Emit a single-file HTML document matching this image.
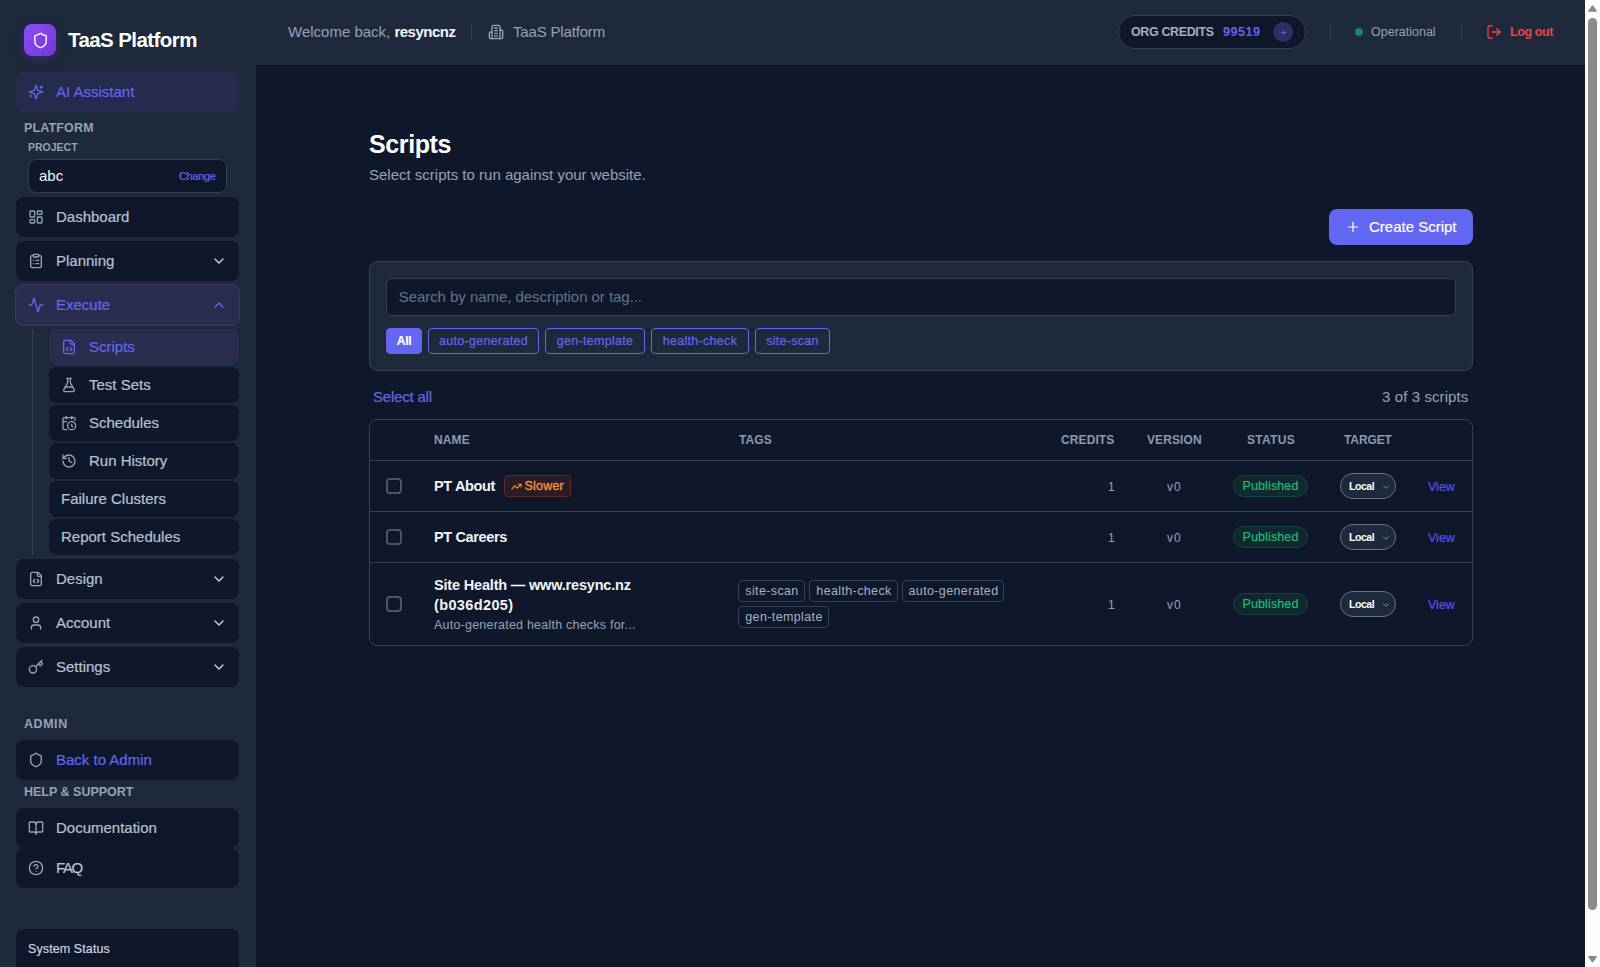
<!DOCTYPE html>
<html lang="en">
<head>
<meta charset="utf-8">
<title>TaaS Platform - Scripts</title>
<style>
*{box-sizing:border-box;margin:0;padding:0}
html,body{width:1600px;height:967px;overflow:hidden;background:#0f172a}
body{font-family:"Liberation Sans",sans-serif;color:#cbd5e1;position:relative;font-size:15px;line-height:1}
.abs{position:absolute}
svg{display:block}
.ic{position:absolute;fill:none;stroke:currentColor;stroke-width:2;stroke-linecap:round;stroke-linejoin:round}
.t{position:absolute;white-space:nowrap}

/* ---------- sidebar ---------- */
#side{position:absolute;left:0;top:0;width:256px;height:967px;background:#1e293b}
.nav{position:absolute;left:16px;width:223px;height:40px;background:#0f172a;border-radius:8px;color:#b6c2d3}
.nav .ic{left:12px;top:12px;width:16px;height:16px;color:#94a3b8}
.nav .lbl{position:absolute;left:40px;top:12px;font-size:15px;letter-spacing:0;white-space:nowrap}
.nav .chev{left:195px;top:12px;width:16px;height:16px;color:#cbd5e1}
.sub{position:absolute;left:49px;width:190px;height:36px;background:#0f172a;border-radius:8px;color:#b6c2d3}
.sub .ic{left:12px;top:10px;width:16px;height:16px;color:#94a3b8}
.sub .lbl{position:absolute;left:40px;top:10px;font-size:15px;letter-spacing:0;white-space:nowrap}
.sub.noic .lbl{left:12px}
.nav.ai{background:#242b4d;color:#6366f1}
.nav.ai .ic{color:#6366f1}
.nav.exec{left:15px;width:225px;height:42px;background:#2b2d4e;border:1px solid #3b386c;color:#6366f1}
.nav.exec .ic{left:12px;top:12px;color:#6366f1}
.nav.exec .lbl{top:12px}
.nav.exec .chev{left:195px;top:12px;color:#6366f1}
.nav.adm .lbl{color:#6366f1}
.sub.on{background:#2b2d4e;color:#6366f1}
.sub.on .ic{color:#6366f1}
.sec{position:absolute;left:24px;font-size:12.5px;font-weight:bold;letter-spacing:.15px;color:#94a3b8;white-space:nowrap}

/* ---------- header ---------- */
#head{position:absolute;left:256px;top:0;width:1329px;height:65px;background:#1e293b}
.vdiv{position:absolute;top:24px;width:1px;height:16px;background:#334155}

/* ---------- scrollbar ---------- */
#sb{position:absolute;left:1585px;top:0;width:15px;height:967px;background:#fcfcfc}
#sb .thumb{position:absolute;left:3px;top:18px;width:9px;height:892px;border-radius:5px;background:#8b8b8b}
#sb .up{position:absolute;left:3px;top:5px;width:0;height:0;border-left:4.5px solid transparent;border-right:4.5px solid transparent;border-bottom:7px solid #8b8b8b}
#sb .dn{position:absolute;left:3px;top:956px;width:0;height:0;border-left:4.5px solid transparent;border-right:4.5px solid transparent;border-top:7px solid #8b8b8b}

/* ---------- main ---------- */
#main{position:absolute;left:256px;top:65px;width:1329px;height:902px;background:#0f172a}

#mc{position:absolute;left:-256px;top:-65px;width:1600px;height:967px}
#card{position:absolute;left:369px;top:261px;width:1104px;height:110px;background:#1e293b;border:1px solid #334155;border-radius:8px}
#search{position:absolute;left:386px;top:278px;width:1070px;height:38px;background:#0f172a;border:1px solid #334155;border-radius:6px}
.chip{position:absolute;top:328px;height:26px;border:1px solid #6366f1;border-radius:4px;color:#6366f1;font-size:12.5px;letter-spacing:.3px}
.chip span{position:absolute;left:0;right:0;top:6px;text-align:center;white-space:nowrap}
.chip.all{background:#6366f1;color:#fff;font-weight:bold;border-color:#6d5cf0;font-size:12px;letter-spacing:-.3px}
#tbl{position:absolute;left:369px;top:419px;width:1104px;height:227px;border:1px solid #334155;border-radius:8px}
.hl{position:absolute;left:370px;width:1102px;height:1px;background:#334155}
.th{position:absolute;top:434px;font-size:12px;font-weight:bold;letter-spacing:.1px;color:#8b99ae;white-space:nowrap}
.cb{position:absolute;left:386px;width:16px;height:16px;border:2px solid #48566c;border-radius:4px;background:#0f172a}
.nm{position:absolute;left:434px;font-size:14.5px;letter-spacing:-.36px;font-weight:bold;color:#f1f5f9;white-space:nowrap}
.tag{position:absolute;height:22px;border:1px solid #334155;border-radius:4px;color:#a5b2c5;font-size:12.5px;letter-spacing:.37px}
.tag span{position:absolute;left:1px;right:0;top:3.5px;text-align:center;white-space:nowrap}
.num{position:absolute;font-size:12px;color:#94a3b8;white-space:nowrap}
.pub{position:absolute;left:1233px;width:75px;height:22px;border:1px solid #14463f;border-radius:11px;background:#10292f;color:#22b97d;font-size:12.5px}
.pub span{position:absolute;left:0;right:0;top:4px;text-align:center;letter-spacing:.12px}
.selx{position:absolute;left:1340px;width:56px;height:26px;border:1px solid #64748b;border-radius:13px;background:#1e293b}
.selx span{position:absolute;left:8px;top:7px;font-size:10.5px;font-weight:bold;color:#fff;letter-spacing:-.45px}
.selx svg{left:40px;top:7.5px;width:10px;height:10px;color:#94a3b8}
.view{position:absolute;left:1428px;font-size:12.5px;color:#5850ec;white-space:nowrap}
#createt,.pub span,.chip span,#selall,.view,.nav .lbl,.sub .lbl,#sys span,#chg{-webkit-text-stroke:.2px}
</style>
</head>
<body>
<svg width="0" height="0" style="position:absolute">
<defs>
<symbol id="i-shield" viewBox="0 0 24 24"><path d="M20 13c0 5-3.5 7.5-7.66 8.95a1 1 0 0 1-.67-.01C7.5 20.5 4 18 4 13V6a1 1 0 0 1 1-1c2 0 4.5-1.2 6.24-2.72a1.17 1.17 0 0 1 1.52 0C14.51 3.81 17 5 19 5a1 1 0 0 1 1 1z"/></symbol>
<symbol id="i-sparkles" viewBox="0 0 24 24"><path d="M9.937 15.5A2 2 0 0 0 8.5 14.063l-6.135-1.582a.5.5 0 0 1 0-.962L8.5 9.936A2 2 0 0 0 9.937 8.5l1.582-6.135a.5.5 0 0 1 .963 0L14.063 8.5A2 2 0 0 0 15.5 9.937l6.135 1.581a.5.5 0 0 1 0 .964L15.5 14.063a2 2 0 0 0-1.437 1.437l-1.582 6.135a.5.5 0 0 1-.963 0z"/><path d="M20 3v4"/><path d="M22 5h-4"/><path d="M4 17v2"/><path d="M5 18H3"/></symbol>
<symbol id="i-dash" viewBox="0 0 24 24"><rect width="7" height="9" x="3" y="3" rx="1"/><rect width="7" height="5" x="14" y="3" rx="1"/><rect width="7" height="9" x="14" y="12" rx="1"/><rect width="7" height="5" x="3" y="16" rx="1"/></symbol>
<symbol id="i-clip" viewBox="0 0 24 24"><rect width="8" height="4" x="8" y="2" rx="1" ry="1"/><path d="M16 4h2a2 2 0 0 1 2 2v14a2 2 0 0 1-2 2H6a2 2 0 0 1-2-2V6a2 2 0 0 1 2-2h2"/><path d="M12 11h4"/><path d="M12 16h4"/><path d="M8 11h.01"/><path d="M8 16h.01"/></symbol>
<symbol id="i-activity" viewBox="0 0 24 24"><path d="M22 12h-2.48a2 2 0 0 0-1.93 1.46l-2.35 8.36a.25.25 0 0 1-.48 0L9.24 2.18a.25.25 0 0 0-.48 0l-2.35 8.36A2 2 0 0 1 4.49 12H2"/></symbol>
<symbol id="i-filecode" viewBox="0 0 24 24"><path d="M10 12.5 8 15l2 2.5"/><path d="m14 12.5 2 2.5-2 2.5"/><path d="M14 2v4a2 2 0 0 0 2 2h4"/><path d="M15 2H6a2 2 0 0 0-2 2v16a2 2 0 0 0 2 2h12a2 2 0 0 0 2-2V7z"/></symbol>
<symbol id="i-flask" viewBox="0 0 24 24"><path d="M14 2v6a2 2 0 0 0 .245.96l5.51 10.08A2 2 0 0 1 18 22H6a2 2 0 0 1-1.755-2.96l5.51-10.08A2 2 0 0 0 10 8V2"/><path d="M6.453 15h11.094"/><path d="M8.5 2h7"/></symbol>
<symbol id="i-calclock" viewBox="0 0 24 24"><path d="M21 7.5V6a2 2 0 0 0-2-2H5a2 2 0 0 0-2 2v14a2 2 0 0 0 2 2h3.5"/><path d="M16 2v4"/><path d="M8 2v4"/><path d="M3 10h5"/><path d="M17.5 17.5 16 16.3V14"/><circle cx="16" cy="16" r="6"/></symbol>
<symbol id="i-history" viewBox="0 0 24 24"><path d="M3 12a9 9 0 1 0 9-9 9.75 9.75 0 0 0-6.74 2.74L3 8"/><path d="M3 3v5h5"/><path d="M12 7v5l4 2"/></symbol>
<symbol id="i-user" viewBox="0 0 24 24"><path d="M19 21v-2a4 4 0 0 0-4-4H9a4 4 0 0 0-4 4v2"/><circle cx="12" cy="7" r="4"/></symbol>
<symbol id="i-key" viewBox="0 0 24 24"><path d="m15.5 7.5 2.3 2.3a1 1 0 0 0 1.4 0l2.1-2.1a1 1 0 0 0 0-1.4L19 4"/><path d="m21 2-9.6 9.6"/><circle cx="7.5" cy="15.5" r="5.5"/></symbol>
<symbol id="i-book" viewBox="0 0 24 24"><path d="M12 7v14"/><path d="M3 18a1 1 0 0 1-1-1V4a1 1 0 0 1 1-1h5a4 4 0 0 1 4 4 4 4 0 0 1 4-4h5a1 1 0 0 1 1 1v13a1 1 0 0 1-1 1h-6a3 3 0 0 0-3 3 3 3 0 0 0-3-3z"/></symbol>
<symbol id="i-help" viewBox="0 0 24 24"><circle cx="12" cy="12" r="10"/><path d="M9.09 9a3 3 0 0 1 5.83 1c0 2-3 3-3 3"/><path d="M12 17h.01"/></symbol>
<symbol id="i-cdown" viewBox="0 0 24 24"><path d="m6 9 6 6 6-6"/></symbol>
<symbol id="i-cup" viewBox="0 0 24 24"><path d="m18 15-6-6-6 6"/></symbol>
<symbol id="i-building" viewBox="0 0 24 24"><path d="M6 22V4a2 2 0 0 1 2-2h8a2 2 0 0 1 2 2v18Z"/><path d="M6 12H4a2 2 0 0 0-2 2v6a2 2 0 0 0 2 2h2"/><path d="M18 9h2a2 2 0 0 1 2 2v9a2 2 0 0 1-2 2h-2"/><path d="M10 6h4"/><path d="M10 10h4"/><path d="M10 14h4"/><path d="M10 18h4"/></symbol>
<symbol id="i-logout" viewBox="0 0 24 24"><path d="M9 21H5a2 2 0 0 1-2-2V5a2 2 0 0 1 2-2h4"/><polyline points="16 17 21 12 16 7"/><line x1="21" x2="9" y1="12" y2="12"/></symbol>
<symbol id="i-plus" viewBox="0 0 24 24"><path d="M5 12h14"/><path d="M12 5v14"/></symbol>
<symbol id="i-trend" viewBox="0 0 24 24"><polyline points="22 7 13.5 15.5 8.5 10.5 2 17"/><polyline points="16 7 22 7 22 13"/></symbol>
</defs>
</svg>

<div id="side">
  <div class="abs" id="logo" style="left:24px;top:24px;width:32px;height:32px;border-radius:8px;background:linear-gradient(135deg,#8d4ff7,#7434dc);box-shadow:0 4px 10px rgba(124,58,237,.18)"><svg class="ic" style="left:7.5px;top:7.5px;width:17px;height:17px;color:#fff;stroke-width:1.9"><use href="#i-shield"/></svg></div>
  <div class="t" id="brand" style="left:68px;top:30px;font-size:20.5px;letter-spacing:-.58px;font-weight:bold;color:#fff">TaaS Platform</div>
  <div class="nav ai" style="top:72px"><svg class="ic"><use href="#i-sparkles"/></svg><span class="lbl">AI Assistant</span></div>
  <div class="sec" style="top:122px">PLATFORM</div>
  <div class="sec" style="left:28px;top:142px;font-size:10.5px;letter-spacing:0">PROJECT</div>
  <div class="abs" id="proj" style="left:28px;top:159px;width:199px;height:34px;border:1px solid #334155;background:#0f172a;border-radius:8px"><span class="t" style="left:10px;top:8px;font-size:15px;color:#f1f5f9">abc</span><span class="t" id="chg" style="left:150px;top:11px;font-size:11px;letter-spacing:-.35px;color:#6366f1">Change</span></div>
  <div class="nav" style="top:197px"><svg class="ic"><use href="#i-dash"/></svg><span class="lbl">Dashboard</span></div>
  <div class="nav" style="top:241px"><svg class="ic"><use href="#i-clip"/></svg><span class="lbl">Planning</span><svg class="ic chev"><use href="#i-cdown"/></svg></div>
  <div class="nav exec" style="top:284px"><svg class="ic"><use href="#i-activity"/></svg><span class="lbl">Execute</span><svg class="ic chev"><use href="#i-cup"/></svg></div>
  <div class="abs" style="left:32px;top:329px;width:1px;height:226px;background:#334155"></div>
  <div class="sub on" style="top:329px"><svg class="ic"><use href="#i-filecode"/></svg><span class="lbl">Scripts</span></div>
  <div class="sub" style="top:367px"><svg class="ic"><use href="#i-flask"/></svg><span class="lbl">Test Sets</span></div>
  <div class="sub" style="top:405px"><svg class="ic"><use href="#i-calclock"/></svg><span class="lbl">Schedules</span></div>
  <div class="sub" style="top:443px"><svg class="ic"><use href="#i-history"/></svg><span class="lbl">Run History</span></div>
  <div class="sub noic" style="top:481px"><span class="lbl">Failure Clusters</span></div>
  <div class="sub noic" style="top:519px"><span class="lbl">Report Schedules</span></div>
  <div class="nav" style="top:559px"><svg class="ic"><use href="#i-filecode"/></svg><span class="lbl">Design</span><svg class="ic chev"><use href="#i-cdown"/></svg></div>
  <div class="nav" style="top:603px"><svg class="ic"><use href="#i-user"/></svg><span class="lbl">Account</span><svg class="ic chev"><use href="#i-cdown"/></svg></div>
  <div class="nav" style="top:647px"><svg class="ic"><use href="#i-key"/></svg><span class="lbl">Settings</span><svg class="ic chev"><use href="#i-cdown"/></svg></div>
  <div class="sec" style="top:718px;letter-spacing:.55px">ADMIN</div>
  <div class="nav adm" style="top:740px"><svg class="ic"><use href="#i-shield"/></svg><span class="lbl">Back to Admin</span></div>
  <div class="sec" style="top:786px;letter-spacing:0">HELP &amp; SUPPORT</div>
  <div class="nav" style="top:808px"><svg class="ic"><use href="#i-book"/></svg><span class="lbl">Documentation</span></div>
  <div class="nav" style="top:848px"><svg class="ic"><use href="#i-help"/></svg><span class="lbl" style="letter-spacing:-1.4px">FAQ</span></div>
  <div class="abs" id="sys" style="left:16px;top:929px;width:223px;height:60px;background:#0f172a;border-radius:8px"><span class="t" style="left:12px;top:14px;font-size:12.5px;letter-spacing:.1px;color:#cbd5e1">System Status</span></div>
</div>

<div id="head">
  <div class="t" id="welcome" style="left:32px;top:24px;font-size:15px;color:#94a3b8">Welcome back, <b id="uname" style="color:#f1f5f9;letter-spacing:-.5px">resyncnz</b></div>
  <div class="vdiv" style="left:215px"></div>
  <svg class="ic" style="left:232px;top:24px;width:16px;height:16px;color:#94a3b8"><use href="#i-building"/></svg>
  <div class="t" id="orgname" style="left:257px;top:24px;font-size:15px;letter-spacing:-.17px;color:#94a3b8">TaaS Platform</div>
  <div class="abs" id="pill" style="left:862px;top:15px;width:188px;height:34px;border:1px solid #334155;border-radius:17px;background:#0f172a">
    <span class="t" id="orgc" style="left:12px;top:10px;font-size:12.5px;letter-spacing:-.38px;font-weight:bold;color:#a3afc2">ORG CREDITS</span>
    <span class="t" id="cred" style="left:104px;top:10px;font-size:12.7px;letter-spacing:.45px;font-weight:bold;color:#6366f1">99519</span>
    <span class="abs" style="left:154px;top:6px;width:20px;height:20px;border-radius:10px;background:#2d2e66"></span>
    <svg class="ic" style="left:161px;top:13px;width:7px;height:7px;color:#6366f1;stroke-width:3"><use href="#i-plus"/></svg>
  </div>
  <div class="vdiv" style="left:1074px"></div>
  <div class="abs" style="left:1099px;top:28px;width:8px;height:8px;border-radius:4px;background:#148a62"></div>
  <div class="t" id="oper" style="left:1115px;top:26px;font-size:12.5px;color:#94a3b8">Operational</div>
  <div class="vdiv" style="left:1205px"></div>
  <svg class="ic" style="left:1230px;top:24px;width:16px;height:16px;color:#ef4444"><use href="#i-logout"/></svg>
  <div class="t" id="logout" style="left:1254px;top:26px;font-size:12.5px;letter-spacing:-.42px;font-weight:bold;color:#ef4444">Log out</div>
</div>

<div id="main">
  <div id="mc">
    <div class="t" id="h1" style="left:369px;top:132px;font-size:25px;letter-spacing:-.38px;font-weight:bold;color:#fff">Scripts</div>
    <div class="t" id="subt" style="left:369px;top:167px;font-size:15px;color:#94a3b8">Select scripts to run against your website.</div>
    <div class="abs" id="create" style="left:1329px;top:209px;width:144px;height:36px;border-radius:8px;background:#6366f1">
      <svg class="ic" style="left:16px;top:10px;width:16px;height:16px;color:#fff;stroke-width:1.8"><use href="#i-plus"/></svg>
      <span class="t" id="createt" style="left:40px;top:10px;font-size:15px;color:#fff">Create Script</span>
    </div>
    <div id="card"></div>
    <div id="search"></div>
    <div class="t" id="ph" style="left:398.7px;top:289px;font-size:15px;letter-spacing:-.05px;color:#64748b">Search by name, description or tag...</div>
    <div class="chip all" style="left:386px;width:36px"><span>All</span></div>
    <div class="chip" style="left:428px;width:111px"><span>auto-generated</span></div>
    <div class="chip" style="left:545px;width:100px"><span>gen-template</span></div>
    <div class="chip" style="left:651px;width:98px"><span>health-check</span></div>
    <div class="chip" style="left:755px;width:75px"><span>site-scan</span></div>
    <div class="t" id="selall" style="left:373px;top:389px;font-size:15px;letter-spacing:-.2px;color:#6366f1">Select all</div>
    <div class="t" id="count" style="left:1382px;top:389px;font-size:15px;letter-spacing:.1px;color:#94a3b8">3 of 3 scripts</div>
    <div id="tbl"></div>
    <div class="hl" style="top:460px"></div>
    <div class="hl" style="top:511px"></div>
    <div class="hl" style="top:562px"></div>
    <div class="th" style="left:434px">NAME</div>
    <div class="th" style="left:739px">TAGS</div>
    <div class="th" style="left:1061px">CREDITS</div>
    <div class="th" style="left:1147px">VERSION</div>
    <div class="th" style="left:1247px;letter-spacing:.3px">STATUS</div>
    <div class="th" style="left:1344px;letter-spacing:-.1px">TARGET</div>
    <div class="cb" style="top:478px"></div>
    <div class="nm" style="top:478.5px">PT About</div>
    <div class="abs" id="slow" style="left:504px;top:475px;width:67px;height:22px;border:1px solid #5e2a21;border-radius:4px;background:#2a1b24">
      <svg class="ic" style="left:6px;top:4.5px;width:11px;height:11px;color:#fb923c;stroke-width:2.4"><use href="#i-trend"/></svg>
      <span class="t" id="slowt" style="left:19.5px;top:4px;font-size:12.5px;letter-spacing:.2px;-webkit-text-stroke:.35px;color:#fb923c">Slower</span>
    </div>
    <div class="num c1" style="left:1108px;top:481px">1</div>
    <div class="num v0" style="left:1167px;top:481px;letter-spacing:.9px">v0</div>
    <div class="pub" style="top:475px"><span>Published</span></div>
    <div class="selx" style="top:473px"><span>Local</span><svg class="ic"><use href="#i-cdown"/></svg></div>
    <div class="view" style="top:481px">View</div>
    <div class="cb" style="top:529px"></div>
    <div class="nm" style="top:529.5px">PT Careers</div>
    <div class="num c1" style="left:1108px;top:532px">1</div>
    <div class="num v0" style="left:1167px;top:532px;letter-spacing:.9px">v0</div>
    <div class="pub" style="top:526px"><span>Published</span></div>
    <div class="selx" style="top:524px"><span>Local</span><svg class="ic"><use href="#i-cdown"/></svg></div>
    <div class="view" style="top:532px">View</div>
    <div class="cb" style="top:596px"></div>
    <div class="nm" id="n3a" style="top:577.5px;letter-spacing:-.18px">Site Health — www.resync.nz</div>
    <div class="nm" id="n3b" style="top:597.5px;letter-spacing:.37px">(b036d205)</div>
    <div class="t" id="desc" style="left:434px;top:618.5px;font-size:12.5px;letter-spacing:.22px;color:#94a3b8">Auto-generated health checks for...</div>
    <div class="tag" style="left:738px;top:580px;width:67px"><span>site-scan</span></div>
    <div class="tag" style="left:809px;top:580px;width:89px"><span>health-check</span></div>
    <div class="tag" style="left:902px;top:580px;width:102px"><span>auto-generated</span></div>
    <div class="tag" style="left:738px;top:606px;width:91px"><span>gen-template</span></div>
    <div class="num c1" style="left:1108px;top:599px">1</div>
    <div class="num v0" style="left:1167px;top:599px;letter-spacing:.9px">v0</div>
    <div class="pub" style="top:593px"><span>Published</span></div>
    <div class="selx" style="top:591px"><span>Local</span><svg class="ic"><use href="#i-cdown"/></svg></div>
    <div class="view" style="top:599px">View</div>
  </div>
</div>

<div id="sb"><svg class="abs" style="left:0;top:0" width="15" height="967" viewBox="0 0 15 967"><g fill="#8b8b8b" stroke="#8b8b8b" stroke-width="1.2" stroke-linejoin="round"><path d="M7.5 5.8 L11.3 11.2 L3.7 11.2 Z"/><path d="M7.5 962 L11.3 956.7 L3.7 956.7 Z"/></g></svg><div class="thumb"></div></div>

</body>
</html>
